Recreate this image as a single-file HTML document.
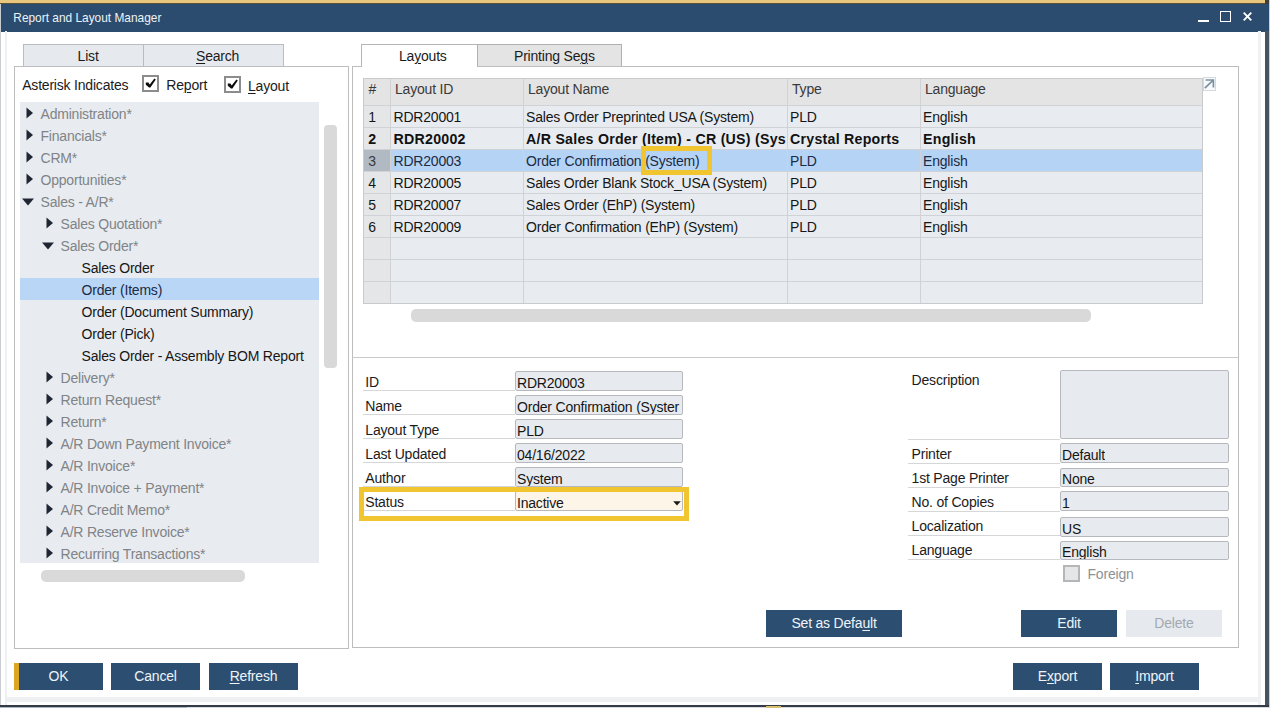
<!DOCTYPE html>
<html><head><meta charset="utf-8"><style>
html,body{margin:0;padding:0;width:1270px;height:708px;overflow:hidden;background:#fff}
body{position:relative;font-family:"Liberation Sans",sans-serif}
.b{position:absolute}
.t{position:absolute;white-space:pre;font-family:"Liberation Sans",sans-serif;letter-spacing:-0.2px}
u{text-decoration:underline;text-underline-offset:2px;text-decoration-thickness:1px}
</style></head><body>
<div class="b" style="left:0px;top:0px;width:1270px;height:708px;background:#ffffff"></div>
<div class="b" style="left:0px;top:0px;width:1265px;height:3px;background:#e9c77e"></div>
<div class="b" style="left:0px;top:3px;width:1265px;height:1px;background:#5a5236"></div>
<div class="b" style="left:1px;top:4px;width:1268px;height:27.5px;background:#2b4c6e"></div>
<div class="b" style="left:0px;top:4px;width:1px;height:704px;background:#c9ccd0"></div>
<div class="b" style="left:5px;top:31px;width:2px;height:674px;background:#eef0f2"></div>
<div class="b" style="left:1258px;top:31px;width:3px;height:674px;background:#f0f1f2"></div>
<div class="b" style="left:1265px;top:0px;width:4px;height:4px;background:#3c3f3a"></div>
<div class="b" style="left:1265px;top:31px;width:4px;height:675px;background:#46545f"></div>
<div class="b" style="left:1269px;top:0px;width:1px;height:708px;background:#c9d0d8"></div>
<div class="b" style="left:7px;top:697px;width:1251px;height:5px;background:#eef0f2"></div>
<div class="b" style="left:0px;top:705px;width:1269px;height:2px;background:#333c46"></div>
<div class="b" style="left:0px;top:707px;width:187px;height:1px;background:#aab6c2"></div>
<div class="b" style="left:187px;top:707px;width:1083px;height:1px;background:#d8dadc"></div>
<div class="b" style="left:766px;top:706px;width:15px;height:2px;background:#d8c070"></div>
<div class="t" style="left:13.3px;top:10.79px;font-size:11.9px;line-height:14.88px;color:#eef3f8;font-weight:400;letter-spacing:0">Report and Layout Manager</div>
<div class="b" style="left:1198px;top:20px;width:11px;height:2px;background:#ffffff"></div>
<div class="b" style="left:1220px;top:11px;width:11px;height:11px;border:1.5px solid #ffffff;box-sizing:border-box"></div>
<svg class="b" style="left:1243px;top:12px" width="9" height="9" viewBox="0 0 9 9"><path d="M0.7 0.7 L8.3 8.3 M8.3 0.7 L0.7 8.3" stroke="#fff" stroke-width="1.9"/></svg>
<div class="b" style="left:23px;top:44px;width:121px;height:22px;background:#e6eaef;border:1px solid #b9bcc0;border-bottom:none;box-sizing:border-box"></div>
<div class="b" style="left:143px;top:44px;width:141px;height:22px;background:#e6eaef;border:1px solid #b9bcc0;border-bottom:none;box-sizing:border-box"></div>
<div class="t" style="left:77.6px;top:47.80px;font-size:14px;line-height:17.5px;color:#1b1b1b;font-weight:400;">List</div>
<div class="t" style="left:196px;top:47.80px;font-size:14px;line-height:17.5px;color:#1b1b1b;font-weight:400;"><u>S</u>earch</div>
<div class="b" style="left:14px;top:66px;width:335px;height:583px;border:1px solid #bdbdbd;box-sizing:border-box"></div>
<div class="t" style="left:22.2px;top:76.80px;font-size:14px;line-height:17.5px;color:#1b1b1b;font-weight:400;">Asterisk Indicates</div>
<div class="b" style="left:142px;top:75px;width:17px;height:17px;border:2px solid #8a8c8e;background:#ffffff;box-sizing:border-box"></div><svg class="b" style="left:142px;top:75px" width="17" height="17" viewBox="0 0 17 17"><path d="M3.8 7.6 L6.4 7.6 L7.7 9.6 L12.4 3.6 L13.8 4.6 L8.4 12.6 L7 12.6 L3.8 9.8 Z" fill="#0c0c0c"/></svg>
<div class="t" style="left:166.3px;top:77.00px;font-size:14px;line-height:17.5px;color:#1b1b1b;font-weight:400;">Re<u>p</u>ort</div>
<div class="b" style="left:224px;top:76px;width:17px;height:17px;border:2px solid #8a8c8e;background:#ffffff;box-sizing:border-box"></div><svg class="b" style="left:224px;top:76px" width="17" height="17" viewBox="0 0 17 17"><path d="M3.8 7.6 L6.4 7.6 L7.7 9.6 L12.4 3.6 L13.8 4.6 L8.4 12.6 L7 12.6 L3.8 9.8 Z" fill="#0c0c0c"/></svg>
<div class="t" style="left:248px;top:78.00px;font-size:14px;line-height:17.5px;color:#1b1b1b;font-weight:400;"><u>L</u>ayout</div>
<div class="b" style="left:20px;top:102px;width:299px;height:461px;background:#e8ecf0"></div>
<div class="b" style="left:20px;top:278px;width:299px;height:22px;background:#b9d6f7"></div>
<div class="t" style="left:40.5px;top:105.60px;font-size:14px;line-height:17.5px;color:#808387;font-weight:400;">Administration*</div>
<svg class="b" style="left:26px;top:107.0px" width="8" height="12" viewBox="0 0 8 12"><path d="M0.5 0.5 L7 6 L0.5 11.5Z" fill="#1f2533"/></svg>
<div class="t" style="left:40.5px;top:127.60px;font-size:14px;line-height:17.5px;color:#808387;font-weight:400;">Financials*</div>
<svg class="b" style="left:26px;top:129.0px" width="8" height="12" viewBox="0 0 8 12"><path d="M0.5 0.5 L7 6 L0.5 11.5Z" fill="#1f2533"/></svg>
<div class="t" style="left:40.5px;top:149.60px;font-size:14px;line-height:17.5px;color:#808387;font-weight:400;">CRM*</div>
<svg class="b" style="left:26px;top:151.0px" width="8" height="12" viewBox="0 0 8 12"><path d="M0.5 0.5 L7 6 L0.5 11.5Z" fill="#1f2533"/></svg>
<div class="t" style="left:40.5px;top:171.60px;font-size:14px;line-height:17.5px;color:#808387;font-weight:400;">Opportunities*</div>
<svg class="b" style="left:26px;top:173.0px" width="8" height="12" viewBox="0 0 8 12"><path d="M0.5 0.5 L7 6 L0.5 11.5Z" fill="#1f2533"/></svg>
<div class="t" style="left:40.5px;top:193.60px;font-size:14px;line-height:17.5px;color:#808387;font-weight:400;">Sales - A/R*</div>
<svg class="b" style="left:22px;top:198.3px" width="12" height="8" viewBox="0 0 12 8"><path d="M0 0.5 L12 0.5 L6 7.5Z" fill="#1f2533"/></svg>
<div class="t" style="left:60.5px;top:215.60px;font-size:14px;line-height:17.5px;color:#808387;font-weight:400;">Sales Quotation*</div>
<svg class="b" style="left:46px;top:217.0px" width="8" height="12" viewBox="0 0 8 12"><path d="M0.5 0.5 L7 6 L0.5 11.5Z" fill="#1f2533"/></svg>
<div class="t" style="left:60.5px;top:237.60px;font-size:14px;line-height:17.5px;color:#808387;font-weight:400;">Sales Order*</div>
<svg class="b" style="left:42px;top:242.3px" width="12" height="8" viewBox="0 0 12 8"><path d="M0 0.5 L12 0.5 L6 7.5Z" fill="#1f2533"/></svg>
<div class="t" style="left:81.5px;top:259.60px;font-size:14px;line-height:17.5px;color:#161616;font-weight:400;">Sales Order</div>
<div class="t" style="left:81.5px;top:281.60px;font-size:14px;line-height:17.5px;color:#1c2a44;font-weight:400;">Order (Items)</div>
<div class="t" style="left:81.5px;top:303.60px;font-size:14px;line-height:17.5px;color:#161616;font-weight:400;">Order (Document Summary)</div>
<div class="t" style="left:81.5px;top:325.60px;font-size:14px;line-height:17.5px;color:#161616;font-weight:400;">Order (Pick)</div>
<div class="t" style="left:81.5px;top:347.60px;font-size:14px;line-height:17.5px;color:#161616;font-weight:400;">Sales Order - Assembly BOM Report</div>
<div class="t" style="left:60.5px;top:369.60px;font-size:14px;line-height:17.5px;color:#808387;font-weight:400;">Delivery*</div>
<svg class="b" style="left:46px;top:371.0px" width="8" height="12" viewBox="0 0 8 12"><path d="M0.5 0.5 L7 6 L0.5 11.5Z" fill="#1f2533"/></svg>
<div class="t" style="left:60.5px;top:391.60px;font-size:14px;line-height:17.5px;color:#808387;font-weight:400;">Return Request*</div>
<svg class="b" style="left:46px;top:393.0px" width="8" height="12" viewBox="0 0 8 12"><path d="M0.5 0.5 L7 6 L0.5 11.5Z" fill="#1f2533"/></svg>
<div class="t" style="left:60.5px;top:413.60px;font-size:14px;line-height:17.5px;color:#808387;font-weight:400;">Return*</div>
<svg class="b" style="left:46px;top:415.0px" width="8" height="12" viewBox="0 0 8 12"><path d="M0.5 0.5 L7 6 L0.5 11.5Z" fill="#1f2533"/></svg>
<div class="t" style="left:60.5px;top:435.60px;font-size:14px;line-height:17.5px;color:#808387;font-weight:400;">A/R Down Payment Invoice*</div>
<svg class="b" style="left:46px;top:437.0px" width="8" height="12" viewBox="0 0 8 12"><path d="M0.5 0.5 L7 6 L0.5 11.5Z" fill="#1f2533"/></svg>
<div class="t" style="left:60.5px;top:457.60px;font-size:14px;line-height:17.5px;color:#808387;font-weight:400;">A/R Invoice*</div>
<svg class="b" style="left:46px;top:459.0px" width="8" height="12" viewBox="0 0 8 12"><path d="M0.5 0.5 L7 6 L0.5 11.5Z" fill="#1f2533"/></svg>
<div class="t" style="left:60.5px;top:479.60px;font-size:14px;line-height:17.5px;color:#808387;font-weight:400;">A/R Invoice + Payment*</div>
<svg class="b" style="left:46px;top:481.0px" width="8" height="12" viewBox="0 0 8 12"><path d="M0.5 0.5 L7 6 L0.5 11.5Z" fill="#1f2533"/></svg>
<div class="t" style="left:60.5px;top:501.60px;font-size:14px;line-height:17.5px;color:#808387;font-weight:400;">A/R Credit Memo*</div>
<svg class="b" style="left:46px;top:503.0px" width="8" height="12" viewBox="0 0 8 12"><path d="M0.5 0.5 L7 6 L0.5 11.5Z" fill="#1f2533"/></svg>
<div class="t" style="left:60.5px;top:523.60px;font-size:14px;line-height:17.5px;color:#808387;font-weight:400;">A/R Reserve Invoice*</div>
<svg class="b" style="left:46px;top:525.0px" width="8" height="12" viewBox="0 0 8 12"><path d="M0.5 0.5 L7 6 L0.5 11.5Z" fill="#1f2533"/></svg>
<div class="t" style="left:60.5px;top:545.60px;font-size:14px;line-height:17.5px;color:#808387;font-weight:400;">Recurring Transactions*</div>
<svg class="b" style="left:46px;top:547.0px" width="8" height="12" viewBox="0 0 8 12"><path d="M0.5 0.5 L7 6 L0.5 11.5Z" fill="#1f2533"/></svg>
<div class="b" style="left:324px;top:125px;width:13px;height:243px;background:#d9d9d9;border-radius:4px"></div>
<div class="b" style="left:41px;top:570px;width:204px;height:12px;background:#d9d9d9;border-radius:5px"></div>
<div class="b" style="left:352px;top:66px;width:887px;height:582px;border:1px solid #bdbdbd;box-sizing:border-box"></div>
<div class="b" style="left:361px;top:44px;width:117px;height:23px;background:#ffffff;border:1px solid #b5b5b5;border-bottom:none;box-sizing:border-box"></div>
<div class="b" style="left:477px;top:44px;width:145px;height:22px;background:#e4e4e4;border:1px solid #b0b0b0;border-bottom:none;box-sizing:border-box"></div>
<div class="t" style="left:399px;top:48.00px;font-size:14px;line-height:17.5px;color:#1b1b1b;font-weight:400;">La<u>y</u>outs</div>
<div class="t" style="left:514px;top:48.00px;font-size:14px;line-height:17.5px;color:#1b1b1b;font-weight:400;">Printing Se<u>g</u>s</div>
<div class="b" style="left:363px;top:78px;width:840px;height:226px;background:#e8ecf0;border:1px solid #c8cacc;box-sizing:border-box"></div>
<div class="b" style="left:364px;top:79px;width:838px;height:26px;background:#e4e4e4"></div>
<div class="b" style="left:364px;top:105px;width:26px;height:198px;background:#e5e6e7"></div>
<div class="b" style="left:390px;top:149px;width:812px;height:22px;background:#b5d4f5"></div>
<div class="b" style="left:364px;top:149px;width:26px;height:22px;background:#b1b9c3"></div>
<div class="b" style="left:390px;top:79px;width:1px;height:224px;background:#d0d2d4"></div>
<div class="b" style="left:523px;top:79px;width:1px;height:224px;background:#d0d2d4"></div>
<div class="b" style="left:787px;top:79px;width:1px;height:224px;background:#d0d2d4"></div>
<div class="b" style="left:920px;top:79px;width:1px;height:224px;background:#d0d2d4"></div>
<div class="b" style="left:364px;top:105px;width:838px;height:1px;background:#d0d3d6"></div>
<div class="b" style="left:364px;top:127px;width:838px;height:1px;background:#d0d3d6"></div>
<div class="b" style="left:364px;top:149px;width:838px;height:1px;background:#d0d3d6"></div>
<div class="b" style="left:364px;top:171px;width:838px;height:1px;background:#d0d3d6"></div>
<div class="b" style="left:364px;top:193px;width:838px;height:1px;background:#d0d3d6"></div>
<div class="b" style="left:364px;top:215px;width:838px;height:1px;background:#d0d3d6"></div>
<div class="b" style="left:364px;top:237px;width:838px;height:1px;background:#d0d3d6"></div>
<div class="b" style="left:364px;top:259px;width:838px;height:1px;background:#d0d3d6"></div>
<div class="b" style="left:364px;top:281px;width:838px;height:1px;background:#d0d3d6"></div>
<div class="t" style="left:368.6px;top:81.00px;font-size:14px;line-height:17.5px;color:#3a3a3a;font-weight:400;">#</div>
<div class="t" style="left:395px;top:81.00px;font-size:14px;line-height:17.5px;color:#3a3a3a;font-weight:400;">Layout ID</div>
<div class="t" style="left:528px;top:81.00px;font-size:14px;line-height:17.5px;color:#3a3a3a;font-weight:400;">Layout Name</div>
<div class="t" style="left:792px;top:81.00px;font-size:14px;line-height:17.5px;color:#3a3a3a;font-weight:400;">Type</div>
<div class="t" style="left:925px;top:81.00px;font-size:14px;line-height:17.5px;color:#3a3a3a;font-weight:400;">Language</div>
<div class="t" style="left:368.3px;top:108.90px;font-size:14px;line-height:17.5px;color:#161616;font-weight:400;">1</div>
<div class="t" style="left:393.5px;top:108.90px;font-size:14px;line-height:17.5px;color:#161616;font-weight:400;">RDR20001</div>
<div class="t" style="left:526px;top:108.90px;font-size:14px;line-height:17.5px;color:#161616;font-weight:400;">Sales Order Preprinted USA (System)</div>
<div class="t" style="left:790px;top:108.90px;font-size:14px;line-height:17.5px;color:#161616;font-weight:400;">PLD</div>
<div class="t" style="left:923px;top:108.90px;font-size:14px;line-height:17.5px;color:#161616;font-weight:400;">English</div>
<div class="t" style="left:368.3px;top:128.30px;width:20.69999999999999px;overflow:hidden;font-size:14.2px;line-height:22px;font-weight:700;color:#111;letter-spacing:0.25px">2</div>
<div class="t" style="left:393.5px;top:128.30px;width:128.5px;overflow:hidden;font-size:14.2px;line-height:22px;font-weight:700;color:#111;letter-spacing:0.25px">RDR20002</div>
<div class="t" style="left:526px;top:128.30px;width:260px;overflow:hidden;font-size:14.2px;line-height:22px;font-weight:700;color:#111;letter-spacing:0.25px">A/R Sales Order (Item) - CR (US) (System)</div>
<div class="t" style="left:790px;top:128.30px;width:129px;overflow:hidden;font-size:14.2px;line-height:22px;font-weight:700;color:#111;letter-spacing:0.25px">Crystal Reports</div>
<div class="t" style="left:923px;top:128.30px;width:279px;overflow:hidden;font-size:14.2px;line-height:22px;font-weight:700;color:#111;letter-spacing:0.25px">English</div>
<div class="t" style="left:368.3px;top:152.90px;font-size:14px;line-height:17.5px;color:#3a3a3a;font-weight:400;">3</div>
<div class="t" style="left:393.5px;top:152.90px;font-size:14px;line-height:17.5px;color:#1c2a44;font-weight:400;">RDR20003</div>
<div class="t" style="left:526px;top:152.90px;font-size:14px;line-height:17.5px;color:#1c2a44;font-weight:400;">Order Confirmatio<span style="">n (System)</span></div>
<div class="t" style="left:790px;top:152.90px;font-size:14px;line-height:17.5px;color:#1c2a44;font-weight:400;">PLD</div>
<div class="t" style="left:923px;top:152.90px;font-size:14px;line-height:17.5px;color:#1c2a44;font-weight:400;">English</div>
<div class="t" style="left:368.3px;top:174.90px;font-size:14px;line-height:17.5px;color:#161616;font-weight:400;">4</div>
<div class="t" style="left:393.5px;top:174.90px;font-size:14px;line-height:17.5px;color:#161616;font-weight:400;">RDR20005</div>
<div class="t" style="left:526px;top:174.90px;font-size:14px;line-height:17.5px;color:#161616;font-weight:400;">Sales Order Blank Stock_USA (System)</div>
<div class="t" style="left:790px;top:174.90px;font-size:14px;line-height:17.5px;color:#161616;font-weight:400;">PLD</div>
<div class="t" style="left:923px;top:174.90px;font-size:14px;line-height:17.5px;color:#161616;font-weight:400;">English</div>
<div class="t" style="left:368.3px;top:196.90px;font-size:14px;line-height:17.5px;color:#161616;font-weight:400;">5</div>
<div class="t" style="left:393.5px;top:196.90px;font-size:14px;line-height:17.5px;color:#161616;font-weight:400;">RDR20007</div>
<div class="t" style="left:526px;top:196.90px;font-size:14px;line-height:17.5px;color:#161616;font-weight:400;">Sales Order (EhP) (System)</div>
<div class="t" style="left:790px;top:196.90px;font-size:14px;line-height:17.5px;color:#161616;font-weight:400;">PLD</div>
<div class="t" style="left:923px;top:196.90px;font-size:14px;line-height:17.5px;color:#161616;font-weight:400;">English</div>
<div class="t" style="left:368.3px;top:218.90px;font-size:14px;line-height:17.5px;color:#161616;font-weight:400;">6</div>
<div class="t" style="left:393.5px;top:218.90px;font-size:14px;line-height:17.5px;color:#161616;font-weight:400;">RDR20009</div>
<div class="t" style="left:526px;top:218.90px;font-size:14px;line-height:17.5px;color:#161616;font-weight:400;">Order Confirmation (EhP) (System)</div>
<div class="t" style="left:790px;top:218.90px;font-size:14px;line-height:17.5px;color:#161616;font-weight:400;">PLD</div>
<div class="t" style="left:923px;top:218.90px;font-size:14px;line-height:17.5px;color:#161616;font-weight:400;">English</div>
<div class="b" style="left:1202.5px;top:77px;width:13.5px;height:14px;border:1px solid #d6dadd;background:#f7fafc;box-sizing:border-box"></div>
<svg class="b" style="left:1203px;top:77px" width="13" height="14" viewBox="0 0 13 14"><path d="M1.8 11.2 L10 3.4 M2.6 3 L10.4 3 L10.4 10.6" stroke="#7d919f" stroke-width="1.7" fill="none"/></svg>
<div class="b" style="left:641px;top:146px;width:71px;height:28.5px;border:5px solid #f1c52f;box-sizing:border-box"></div>
<div class="b" style="left:411px;top:309px;width:680px;height:13px;background:#d9d9d9;border-radius:5px"></div>
<div class="b" style="left:352px;top:357px;width:887px;height:1px;background:#c8cacc"></div>
<div class="t" style="left:365.3px;top:373.90px;font-size:14px;line-height:17.5px;color:#1b1b1b;font-weight:400;">ID</div>
<div class="b" style="left:363px;top:390px;width:152px;height:1px;background:#d4d6d8"></div>
<div class="b" style="left:515px;top:371px;width:168px;height:19.5px;background:#e7ebef;border:1px solid #b5b9bd;border-radius:2px;box-sizing:border-box"></div>
<div class="t" style="left:517px;top:373.6px;width:165px;height:16.4px;overflow:hidden;font-size:14px;line-height:18px;color:#161616">RDR20003</div>
<div class="t" style="left:365.3px;top:397.90px;font-size:14px;line-height:17.5px;color:#1b1b1b;font-weight:400;">Name</div>
<div class="b" style="left:363px;top:414px;width:152px;height:1px;background:#d4d6d8"></div>
<div class="b" style="left:515px;top:395px;width:168px;height:19.5px;background:#e7ebef;border:1px solid #b5b9bd;border-radius:2px;box-sizing:border-box"></div>
<div class="t" style="left:517px;top:397.6px;width:165px;height:16.4px;overflow:hidden;font-size:14px;line-height:18px;color:#161616">Order Confirmation (Syster</div>
<div class="t" style="left:365.3px;top:421.90px;font-size:14px;line-height:17.5px;color:#1b1b1b;font-weight:400;">Layout Type</div>
<div class="b" style="left:363px;top:438px;width:152px;height:1px;background:#d4d6d8"></div>
<div class="b" style="left:515px;top:419px;width:168px;height:19.5px;background:#e7ebef;border:1px solid #b5b9bd;border-radius:2px;box-sizing:border-box"></div>
<div class="t" style="left:517px;top:421.6px;width:165px;height:16.4px;overflow:hidden;font-size:14px;line-height:18px;color:#161616">PLD</div>
<div class="t" style="left:365.3px;top:445.90px;font-size:14px;line-height:17.5px;color:#1b1b1b;font-weight:400;">Last Updated</div>
<div class="b" style="left:363px;top:462px;width:152px;height:1px;background:#d4d6d8"></div>
<div class="b" style="left:515px;top:443px;width:168px;height:19.5px;background:#e7ebef;border:1px solid #b5b9bd;border-radius:2px;box-sizing:border-box"></div>
<div class="t" style="left:517px;top:445.6px;width:165px;height:16.4px;overflow:hidden;font-size:14px;line-height:18px;color:#161616">04/16/2022</div>
<div class="t" style="left:365.3px;top:469.90px;font-size:14px;line-height:17.5px;color:#1b1b1b;font-weight:400;">Author</div>
<div class="b" style="left:363px;top:486px;width:152px;height:1px;background:#d4d6d8"></div>
<div class="b" style="left:515px;top:467px;width:168px;height:19.5px;background:#e7ebef;border:1px solid #b5b9bd;border-radius:2px;box-sizing:border-box"></div>
<div class="t" style="left:517px;top:469.6px;width:165px;height:16.4px;overflow:hidden;font-size:14px;line-height:18px;color:#161616">System</div>
<div class="t" style="left:365.3px;top:493.90px;font-size:14px;line-height:17.5px;color:#1b1b1b;font-weight:400;">Status</div>
<div class="b" style="left:363px;top:510px;width:152px;height:1px;background:#d4d6d8"></div>
<div class="b" style="left:515px;top:491px;width:168px;height:19.5px;background:#fdf5e8;border:1px solid #b5b9bd;border-radius:2px;box-sizing:border-box"></div>
<div class="t" style="left:517px;top:493.6px;width:165px;height:16.4px;overflow:hidden;font-size:14px;line-height:18px;color:#161616">Inactive</div>
<svg class="b" style="left:672.5px;top:500.8px" width="8" height="5" viewBox="0 0 8 5"><path d="M0.2 0.2 L7.8 0.2 L4 4.4Z" fill="#1a1a1a"/></svg>
<div class="b" style="left:359px;top:487px;width:330px;height:34px;border:5px solid #f1c52f;box-sizing:border-box"></div>
<div class="t" style="left:911.6px;top:371.80px;font-size:14px;line-height:17.5px;color:#1b1b1b;font-weight:400;">Description</div>
<div class="b" style="left:908px;top:439px;width:152px;height:1px;background:#d4d6d8"></div>
<div class="t" style="left:911.6px;top:445.60px;font-size:14px;line-height:17.5px;color:#1b1b1b;font-weight:400;">Printer</div>
<div class="b" style="left:908px;top:462.5px;width:152px;height:1px;background:#d4d6d8"></div>
<div class="t" style="left:911.6px;top:469.60px;font-size:14px;line-height:17.5px;color:#1b1b1b;font-weight:400;">1st Page Printer</div>
<div class="b" style="left:908px;top:486.5px;width:152px;height:1px;background:#d4d6d8"></div>
<div class="t" style="left:911.6px;top:493.60px;font-size:14px;line-height:17.5px;color:#1b1b1b;font-weight:400;">No. of Copies</div>
<div class="b" style="left:908px;top:510.5px;width:152px;height:1px;background:#d4d6d8"></div>
<div class="t" style="left:911.6px;top:517.60px;font-size:14px;line-height:17.5px;color:#1b1b1b;font-weight:400;">Localization</div>
<div class="b" style="left:908px;top:534.5px;width:152px;height:1px;background:#d4d6d8"></div>
<div class="t" style="left:911.6px;top:541.60px;font-size:14px;line-height:17.5px;color:#1b1b1b;font-weight:400;">Language</div>
<div class="b" style="left:908px;top:558.5px;width:152px;height:1px;background:#d4d6d8"></div>
<div class="b" style="left:1060px;top:370px;width:169px;height:69px;background:#e7ebef;border:1px solid #b5b9bd;border-radius:2px;box-sizing:border-box"></div>
<div class="b" style="left:1060px;top:443px;width:169px;height:19.5px;background:#e7ebef;border:1px solid #b5b9bd;border-radius:2px;box-sizing:border-box"></div>
<div class="t" style="left:1062px;top:445.6px;height:16.4px;overflow:hidden;font-size:14px;line-height:18px;color:#161616">Default</div>
<div class="b" style="left:1060px;top:467.5px;width:169px;height:19.5px;background:#e7ebef;border:1px solid #b5b9bd;border-radius:2px;box-sizing:border-box"></div>
<div class="t" style="left:1062px;top:470.1px;height:16.4px;overflow:hidden;font-size:14px;line-height:18px;color:#161616">None</div>
<div class="b" style="left:1060px;top:491px;width:169px;height:19.5px;background:#e7ebef;border:1px solid #b5b9bd;border-radius:2px;box-sizing:border-box"></div>
<div class="t" style="left:1062px;top:493.6px;height:16.4px;overflow:hidden;font-size:14px;line-height:18px;color:#161616">1</div>
<div class="b" style="left:1060px;top:517px;width:169px;height:19.5px;background:#e7ebef;border:1px solid #b5b9bd;border-radius:2px;box-sizing:border-box"></div>
<div class="t" style="left:1062px;top:519.6px;height:16.4px;overflow:hidden;font-size:14px;line-height:18px;color:#161616">US</div>
<div class="b" style="left:1060px;top:540.5px;width:169px;height:19.5px;background:#e7ebef;border:1px solid #b5b9bd;border-radius:2px;box-sizing:border-box"></div>
<div class="t" style="left:1062px;top:543.1px;height:16.4px;overflow:hidden;font-size:14px;line-height:18px;color:#161616">English</div>
<div class="b" style="left:1063px;top:565px;width:17px;height:17px;border:2px solid #b4b6b8;background:#e4e6e8;box-sizing:border-box"></div>
<div class="t" style="left:1087.5px;top:566.00px;font-size:14px;line-height:17.5px;color:#8e9296;font-weight:400;">Foreign</div>
<div class="b" style="left:766px;top:610px;width:136px;height:27px;background:#2c4e70"></div><div class="t" style="left:766px;width:136px;text-align:center;top:614.60px;font-size:14px;line-height:17.5px;color:#eef4fa;font-weight:400;">Set as Defa<u>u</u>lt</div>
<div class="b" style="left:1021px;top:610px;width:96px;height:27px;background:#2c4e70"></div><div class="t" style="left:1021px;width:96px;text-align:center;top:614.60px;font-size:14px;line-height:17.5px;color:#eef4fa;font-weight:400;">Edit</div>
<div class="b" style="left:1126px;top:610px;width:96px;height:27px;background:#e6eaef"></div><div class="t" style="left:1126px;width:96px;text-align:center;top:614.60px;font-size:14px;line-height:17.5px;color:#a3a9b0;font-weight:400;">Delete</div>
<div class="b" style="left:14px;top:663px;width:89px;height:27px;background:#2c4e70"></div><div class="b" style="left:14px;top:663px;width:5px;height:27px;background:#dca621"></div><div class="t" style="left:14px;width:89px;text-align:center;top:667.60px;font-size:14px;line-height:17.5px;color:#eef4fa;font-weight:400;">OK</div>
<div class="b" style="left:111px;top:663px;width:89px;height:27px;background:#2c4e70"></div><div class="t" style="left:111px;width:89px;text-align:center;top:667.60px;font-size:14px;line-height:17.5px;color:#eef4fa;font-weight:400;">Cancel</div>
<div class="b" style="left:209px;top:663px;width:89px;height:27px;background:#2c4e70"></div><div class="t" style="left:209px;width:89px;text-align:center;top:667.60px;font-size:14px;line-height:17.5px;color:#eef4fa;font-weight:400;"><u>R</u>efresh</div>
<div class="b" style="left:1013px;top:663px;width:89px;height:27px;background:#2c4e70"></div><div class="t" style="left:1013px;width:89px;text-align:center;top:667.60px;font-size:14px;line-height:17.5px;color:#eef4fa;font-weight:400;">E<u>x</u>port</div>
<div class="b" style="left:1110px;top:663px;width:89px;height:27px;background:#2c4e70"></div><div class="t" style="left:1110px;width:89px;text-align:center;top:667.60px;font-size:14px;line-height:17.5px;color:#eef4fa;font-weight:400;"><u>I</u>mport</div>
</body></html>
